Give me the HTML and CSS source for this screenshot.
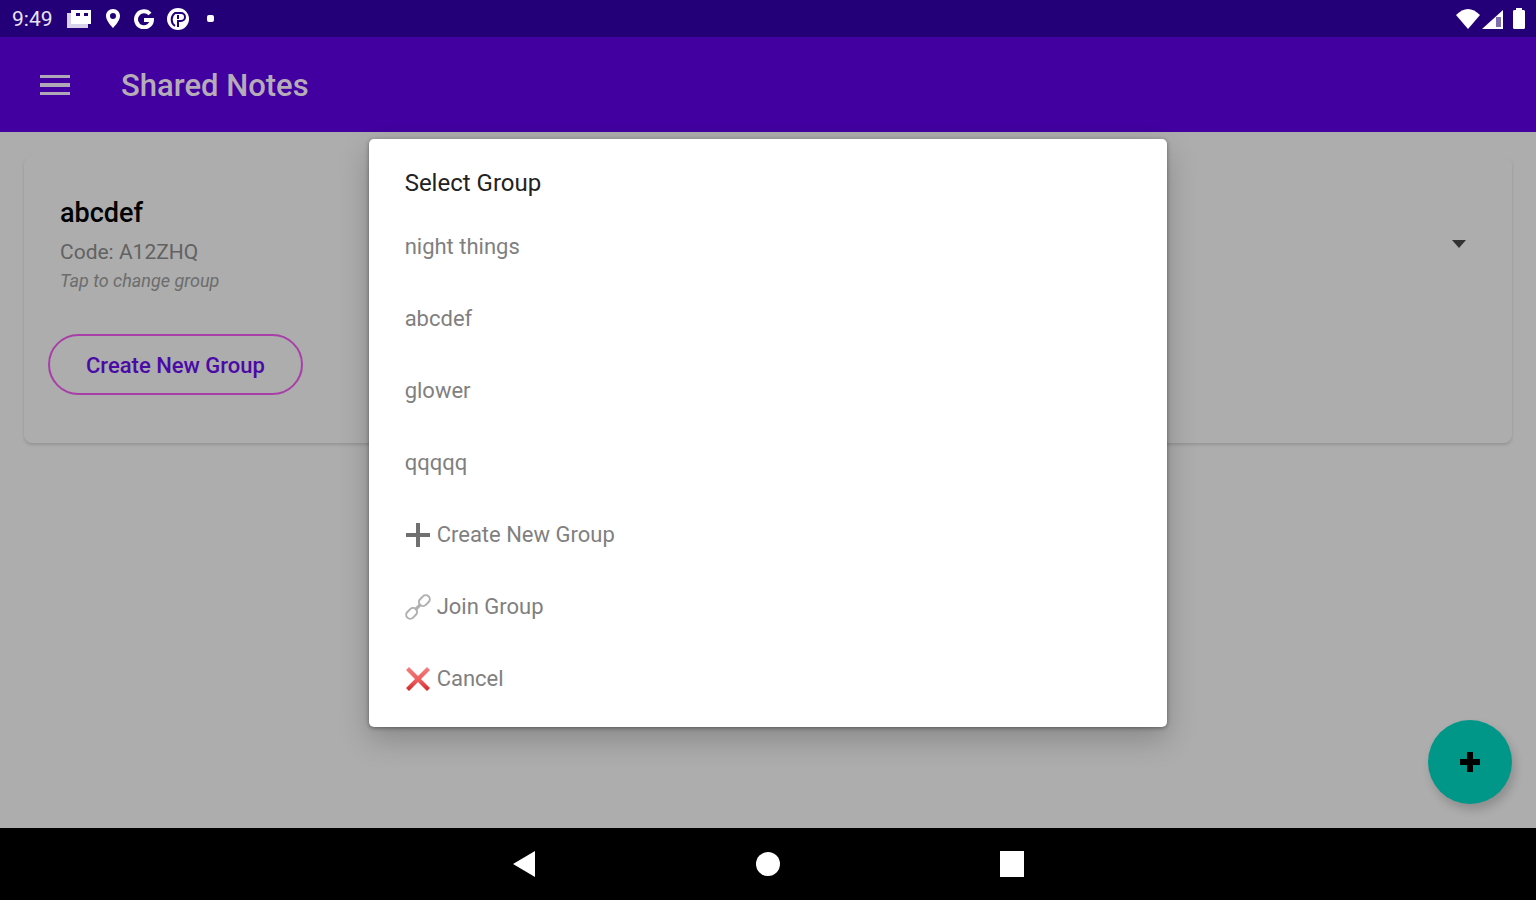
FILE: index.html
```html
<!DOCTYPE html>
<html lang="en">
<head>
    <meta charset="UTF-8">
    <meta name="viewport" content="width=device-width, initial-scale=1.0">
    <title>Shared Notes</title>
    <link rel="stylesheet" href="styles.css">
</head>
<body>
    <!-- Status bar -->
    <div class="status-bar">
        <span class="clock">9:49</span>
        <svg width="26" height="20" viewBox="0 0 26 20">
            <path fill="#d8d2ea" d="M1 4h4v11h17v4H1z"/>
            <path fill="#fff" fill-rule="evenodd" d="M5 1h20v14H5zM10 4v3h4V4zM18 4v3h4V4z"/>
        </svg>
        <svg width="16" height="20" viewBox="0 0 16 20">
            <path fill="#fff" fill-rule="evenodd" d="M8 0C4 0 1 3 1 7c0 5 7 12 7 12s7-7 7-12c0-4-3-7-7-7zm0 4a3 3 0 1 1 0 6 3 3 0 0 1 0-6z"/>
        </svg>
        <svg width="20" height="20" viewBox="0 0 20 20">
            <path fill="none" stroke="#fff" stroke-width="4" d="M16 5A8 8 0 1 0 18 11H10"/>
        </svg>
        <svg width="22" height="22" viewBox="0 0 22 22">
            <circle cx="11" cy="11" r="11" fill="#fff"/>
            <path fill="none" stroke="#240078" stroke-width="2" d="M8 18a8 8 0 0 1 0-13h6a3 3 0 0 1 0 8h-3v6"/>
            <path fill="#240078" d="M10 7h2v4h-2z"/>
        </svg>
        <span class="status-dot"></span>
        <div class="status-right">
            <svg width="24" height="20" viewBox="0 0 24 20">
                <path fill="#fff" d="M12 20L0 6Q12-6 24 6z"/>
            </svg>
            <svg width="22" height="20" viewBox="0 0 22 20">
                <path fill="#fff" d="M0 20L21 1v19z"/>
                <path fill="#7d6fb0" d="M14 8h5v10h-5z"/>
            </svg>
            <svg class="status-battery" width="14" height="22" viewBox="0 0 14 22">
                <path fill="#fff" d="M4 0h6v2h2a2 2 0 0 1 1 2v16a2 2 0 0 1-1 1H2a2 2 0 0 1-1-1V4a2 2 0 0 1 1-2h2z"/>
            </svg>
        </div>
    </div>

    <div class="app">
        <header class="app-bar">
            <button class="menu-button" aria-label="Open menu">
                <svg width="30" height="20" viewBox="0 0 30 20" fill="#b0a7b7">
                    <path d="M0 0h30v3H0zM0 8h30v4H0zM0 17h30v3H0z"/>
                </svg>
            </button>
            <h1>Shared Notes</h1>
        </header>

        <main class="content">
            <section class="card">
                <button class="group-picker">
                    <span class="group-text">
                        <span class="group-name">abcdef</span>
                        <span class="group-code">Code: A12ZHQ</span>
                        <span class="group-hint">Tap to change group</span>
                    </span>
                    <svg width="14" height="8" viewBox="0 0 14 8">
                        <path fill="#333" d="M0 0h14L7 8z"/>
                    </svg>
                </button>
                <button class="outline-button">Create New Group</button>
            </section>
            <button class="fab" aria-label="Add note">
                <svg width="20" height="20" viewBox="0 0 20 20">
                    <path d="M7 0h6v7h7v6h-7v7H7v-7H0V7h7z"/>
                </svg>
            </button>
        </main>

        <!-- Group dialog -->
        <div class="overlay">
            <div class="dialog" role="dialog" aria-labelledby="dialogTitle">
                <h2 id="dialogTitle">Select Group</h2>
                <button class="dialog-item">night things</button>
                <button class="dialog-item">abcdef</button>
                <button class="dialog-item">glower</button>
                <button class="dialog-item">qqqqq</button>
                <button class="dialog-item">
                    <svg width="26" height="26" viewBox="0 0 26 26">
                        <path fill="none" stroke="#707070" stroke-width="4" d="M13 1v24M1 13h24"/>
                    </svg>
                    Create New Group
                </button>
                <button class="dialog-item">
                    <svg width="26" height="26" viewBox="0 0 26 26">
                        <g fill="none" stroke="#b0b0b0" stroke-width="2" transform="rotate(-45 13 13)">
                            <rect x="-2" y="9" width="12" height="8" rx="4"/>
                            <rect x="16" y="9" width="12" height="8" rx="4"/>
                            <path stroke-width="3" d="M9 13h8"/>
                        </g>
                    </svg>
                    Join Group
                </button>
                <button class="dialog-item">
                    <svg width="26" height="26" viewBox="0 0 26 26">
                        <defs>
                            <linearGradient id="crossRed" x1="0" y1="0" x2="0" y2="1">
                                <stop offset="0" stop-color="#f47f7f"/>
                                <stop offset="0.600" stop-color="#ec5a5a"/>
                                <stop offset="1" stop-color="#cf2626"/>
                            </linearGradient>
                        </defs>
                        <path fill="url(#crossRed)" d="M4 1l9 9 9-9 3 3-9 9 9 9-3 3-9-9-9 9-3-3 9-9-9-9z"/>
                    </svg>
                    Cancel
                </button>
            </div>
        </div>
    </div>

    <!-- System navigation -->
    <nav class="nav-bar">
        <button aria-label="Back">
            <svg width="24" height="28" viewBox="0 0 24 28"><path fill="#fff" d="M1 14L23 1v26z"/></svg>
        </button>
        <button aria-label="Home">
            <svg width="24" height="28" viewBox="0 0 24 28"><circle cx="12" cy="14" r="12" fill="#fff"/></svg>
        </button>
        <button aria-label="Recent apps">
            <svg width="24" height="28" viewBox="0 0 24 28"><path fill="#fff" d="M0 1h24v26H0z"/></svg>
        </button>
    </nav>
</body>
</html>
```

FILE: styles.css
```css
* {
  box-sizing: border-box;
}

body {
  margin: 0;
  min-height: 100vh;
  display: flex;
  flex-direction: column;
  background-color: #adadad;
  font-family: Roboto, sans-serif;
}

button {
  margin: 0;
  padding: 0;
  border: none;
  background: none;
  font-family: inherit;
  cursor: pointer;
}

svg {
  display: block;
  flex-shrink: 0;
}

/* Status bar */
.status-bar {
  display: flex;
  align-items: center;
  gap: 13px;
  height: 37px;
  padding: 0 10px 0 12px;
  background-color: #240078;
  color: #e8e4f4;
}

.clock {
  font-size: 21px;
}

.status-dot {
  width: 7px;
  height: 7px;
  margin-left: 5px;
  border-radius: 2px;
  background-color: #fff;
}

.status-right {
  display: flex;
  align-items: center;
  gap: 2px;
  margin-left: auto;
}

.status-battery {
  margin-left: 6px;
}

/* App */
.app {
  position: relative;
  flex: 1;
  display: flex;
  flex-direction: column;
}

.app-bar {
  display: flex;
  align-items: center;
  gap: 51px;
  height: 95px;
  padding: 0 40px;
  background-color: #4200a0;
}

.app-bar h1 {
  margin: 0;
  padding-top: 2px;
  color: #b5acb8;
  font-size: 31px;
  font-weight: 500;
}

.content {
  position: relative;
  flex: 1;
  padding: 24px;
}

.card {
  padding: 24px 24px 48px;
  border-radius: 8px;
  background-color: #adadad;
  box-shadow: 0 2px 3px rgba(0, 0, 0, 0.14);
}

.group-picker {
  display: flex;
  align-items: center;
  justify-content: space-between;
  width: 100%;
  padding: 12px 22px 6px 12px;
  text-align: left;
}

.group-text {
  display: flex;
  flex-direction: column;
}

.group-name {
  margin-bottom: 4px;
  color: #000;
  font-size: 27px;
  font-weight: 500;
  line-height: 42px;
}

.group-code {
  color: #626262;
  font-size: 21px;
  line-height: 28px;
}

.group-hint {
  color: #6c6c6c;
  font-size: 18px;
  font-style: italic;
  line-height: 30px;
}

.outline-button {
  height: 61px;
  margin-top: 32px;
  padding: 2px 36px 0;
  border: 2px solid #a83fa8;
  border-radius: 31px;
  color: #4a0aa6;
  font-size: 22px;
  font-weight: 500;
}

.fab {
  position: absolute;
  right: 24px;
  bottom: 24px;
  display: flex;
  align-items: center;
  justify-content: center;
  width: 84px;
  height: 84px;
  border-radius: 50%;
  background-color: #009688;
  box-shadow: 3px 6px 10px rgba(0, 0, 0, 0.18);
}

/* Dialog */
.overlay {
  position: absolute;
  inset: 0;
  display: flex;
  align-items: center;
  justify-content: center;
}

.dialog {
  width: 52%;
  padding: 28px 0 12px;
  border-radius: 5px;
  background-color: #fff;
  box-shadow: 0 12px 30px rgba(0, 0, 0, 0.22), 0 1px 4px rgba(0, 0, 0, 0.4);
}

.dialog h2 {
  margin: 0 0 12px;
  padding: 0 36px;
  color: #222;
  font-size: 24px;
  font-weight: 400;
  line-height: 32px;
}

.dialog-item {
  display: flex;
  align-items: center;
  gap: 6px;
  width: 100%;
  height: 72px;
  padding: 0 36px;
  color: #808080;
  font-size: 22px;
  text-align: left;
}

/* System navigation */
.nav-bar {
  display: flex;
  align-items: center;
  justify-content: center;
  gap: 220px;
  height: 72px;
  background-color: #000;
}
```
